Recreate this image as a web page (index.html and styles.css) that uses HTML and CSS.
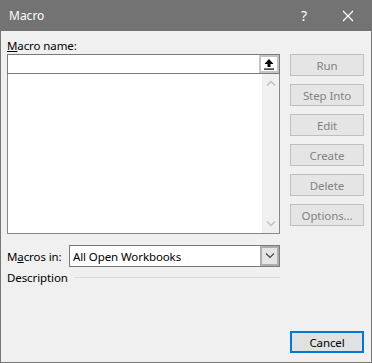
FILE: index.html
```html
<!DOCTYPE html>
<html lang="en">
<head>
    <meta charset="UTF-8">
    <title>Macro</title>
    <link rel="stylesheet" href="styles.css">
</head>
<body>
    <div class="window">
        <div class="title-bar">
            <span class="title">Macro</span>
            <span class="help">?</span>
            <span class="close">
                <svg width="12" height="12" viewBox="0 0 12 12"><path d="M1 1 L11 11 M11 1 L1 11" stroke="#fff" stroke-width="1.2" fill="none"/></svg>
            </span>
        </div>

        <div class="dialog">
            <div class="left">
                <div class="field-label"><u>M</u>acro name:</div>
                <div class="name-input">
                    <div class="pick-btn">
                        <svg width="12" height="12" viewBox="0 0 12 12"><path d="M6 1 L10.5 6 L7.5 6 L7.5 9 L4.5 9 L4.5 6 L1.5 6 Z" fill="#000"/><rect x="1" y="10.5" width="10" height="1.2" fill="#000"/></svg>
                    </div>
                </div>
                <div class="macro-list">
                    <div class="scroll">
                        <svg width="10" height="6" viewBox="0 0 10 6"><path d="M1 5.5 L5 1.5 L9 5.5" stroke="#c2c2c2" stroke-width="1.5" fill="none"/></svg>
                        <svg width="10" height="6" viewBox="0 0 10 6"><path d="M1 0.5 L5 4.5 L9 0.5" stroke="#c2c2c2" stroke-width="1.5" fill="none"/></svg>
                    </div>
                </div>
                <div class="macros-in">
                    <span class="in-label">M<u>a</u>cros in:</span>
                    <div class="select">
                        <span class="select-value">All Open Workbooks</span>
                        <div class="select-btn">
                            <svg width="10" height="6" viewBox="0 0 10 6"><path d="M1 0.5 L5 4.5 L9 0.5" stroke="#444" stroke-width="1.2" fill="none"/></svg>
                        </div>
                    </div>
                </div>
                <div class="description">
                    <span>Description</span>
                    <div class="rule"></div>
                </div>
            </div>

            <div class="right">
                <button class="btn" disabled>Run</button>
                <button class="btn" disabled>Step Into</button>
                <button class="btn" disabled>Edit</button>
                <button class="btn" disabled>Create</button>
                <button class="btn" disabled>Delete</button>
                <button class="btn" disabled>Options...</button>
                <button class="btn cancel-btn">Cancel</button>
            </div>
        </div>
    </div>
</body>
</html>
```

FILE: styles.css
```css
body {
    margin: 0;
    font-family: 'Noto Sans', sans-serif;
    font-size: 11.5px;
    letter-spacing: -0.1px;
    color: #000;
    background: #f0f0f0;
}
.window {
    width: 372px;
    height: 363px;
    box-sizing: border-box;
    border: 1px solid #777;
    border-top: none;
    background: #f0f0f0;
    display: flex;
    flex-direction: column;
}
.title-bar {
    height: 31px;
    margin: 0 -1px;
    background: #737373;
    color: #fff;
    display: flex;
    align-items: center;
    font-size: 12px;
    letter-spacing: 0;
}
.title {
    margin-left: 9px;
    flex: 1;
}
.help {
    width: 14px;
    text-align: center;
    font-size: 14px;
    margin-right: 31px;
}
.close {
    display: flex;
    margin-right: 18px;
}
.dialog {
    flex: 1;
    display: flex;
    padding: 6px 6px 0 6px;
}
.left {
    width: 273px;
    display: flex;
    flex-direction: column;
}
.field-label {
    height: 17px;
    line-height: 17px;
}
.name-input {
    height: 20px;
    box-sizing: border-box;
    border: 1px solid #7a7a7a;
    background: #fff;
    display: flex;
    justify-content: flex-end;
}
.pick-btn {
    width: 20px;
    box-sizing: border-box;
    border: 2px solid #c4c4c4;
    background: #fff;
    display: flex;
    align-items: center;
    justify-content: center;
}
.macro-list {
    height: 160px;
    box-sizing: border-box;
    border: 1px solid #828790;
    border-top: none;
    background: #fff;
    display: flex;
    justify-content: flex-end;
}
.scroll {
    width: 17px;
    background: #f0f0f0;
    display: flex;
    flex-direction: column;
    justify-content: space-between;
    align-items: center;
    padding: 6px 0;
}
.macros-in {
    margin-top: 11px;
    display: flex;
    align-items: center;
}
.in-label {
    width: 62px;
}
.select {
    width: 211px;
    height: 22px;
    box-sizing: border-box;
    border: 1px solid #7a7a7a;
    background: #fff;
    display: flex;
    align-items: center;
}
.select-value {
    flex: 1;
    padding-left: 3px;
}
.select-btn {
    width: 19px;
    height: 20px;
    box-sizing: border-box;
    border: 2px solid #adadad;
    background: #e5e5e5;
    display: flex;
    align-items: center;
    justify-content: center;
}
.description {
    margin-top: 2px;
    height: 16px;
    display: flex;
    align-items: center;
}
.rule {
    flex: 1;
    height: 1px;
    background: #dcdcdc;
    margin-left: 6px;
}
.right {
    width: 74px;
    margin-left: 10px;
    padding-top: 17px;
    padding-bottom: 9px;
    display: flex;
    flex-direction: column;
    gap: 8px;
}
.btn {
    height: 22px;
    box-sizing: border-box;
    border: 1px solid #bfbfbf;
    background: #e5e5e5;
    color: #838383;
    font-family: 'Noto Sans', sans-serif;
    font-size: 11.5px;
    letter-spacing: -0.1px;
    padding: 0;
}
.cancel-btn {
    margin-top: auto;
    border: 2px solid #0078d7;
    background: #e1e1e1;
    color: #000;
}
```
